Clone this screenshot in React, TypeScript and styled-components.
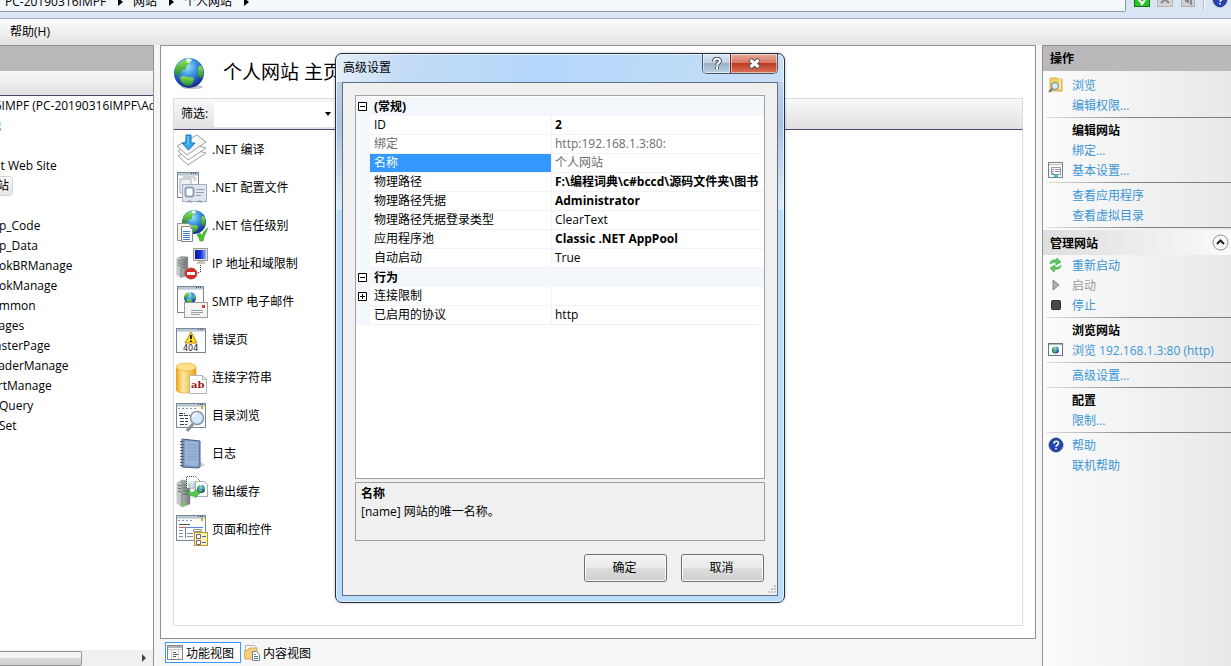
import React from 'react';
import styled, { createGlobalStyle, css } from 'styled-components';

const GlobalStyle = createGlobalStyle`
  * { box-sizing: border-box; }
  html, body { margin: 0; padding: 0; }
  body, button, input, table {
    font-family: 'Open Sans', 'Noto Sans CJK SC', sans-serif;
    font-size: 12px;
    color: #000;
  }
  svg { display: block; flex: none; }
`;

/* ---------- page frame ---------- */

const Page = styled.div`
  position: relative;
  display: flex;
  flex-direction: column;
  height: 100vh;
  overflow: hidden;
  background: #f6f6f6;
`;

const AddressBar = styled.header`
  display: flex;
  flex: none;
  align-items: flex-end;
  height: 19px;
  padding-bottom: 6px;
  background: #d9e5f2;
  border-bottom: 1px solid #a5adb8;
`;

const Breadcrumb = styled.nav`
  display: flex;
  flex: 1;
  align-items: center;
  height: 24px;
  padding: 3px 0 0 5px;
  background: #f4f8fc;
  border: 1px solid #8a97a8;
  border-left: 0;
  border-radius: 0 2px 2px 0;
  overflow: hidden;
`;

const Crumb = styled.a`
  color: #000;
  line-height: 18px;
  text-decoration: none;
  white-space: nowrap;
`;

const CrumbArrow = styled.svg`
  margin: 0 10px 0 12px;
`;

const AddressTools = styled.div`
  display: flex;
  flex: none;
  align-items: center;
  gap: 7px;
  width: 105px;
  height: 24px;
  padding-left: 8px;
`;

const ToolButton = styled.button`
  width: 16px;
  height: 16px;
  padding: 0;
  border: 0;
  background: transparent;
`;

const ToolSeparator = styled.span`
  width: 2px;
  height: 20px;
  background: #fff;
  border-left: 1px solid #b3bfcd;
`;

const MenuBar = styled.nav`
  display: flex;
  flex: none;
  align-items: center;
  height: 26px;
  padding-left: 10px;
  background: linear-gradient(#fdfdfd, #e4e2e4);
`;

const MenuItem = styled.button`
  padding: 0;
  border: 0;
  background: transparent;
  line-height: 20px;
`;

const Workspace = styled.div`
  display: flex;
  flex: 1;
  gap: 6px;
  min-height: 0;
`;

/* ---------- connections tree ---------- */

const TreePanel = styled.aside`
  display: flex;
  flex-direction: column;
  flex: none;
  width: 154px;
  background: #fff;
  border: solid #919191;
  border-width: 1px 1px 0 0;
`;

const PanelTitle = styled.h2`
  flex: none;
  height: 25px;
  margin: 0;
  padding-left: 7px;
  background: #bab8ba;
  font-size: 12px;
  line-height: 25px;
`;

const TreeToolbar = styled.div`
  flex: none;
  height: 25px;
  background: linear-gradient(#f9f9f9, #e2e0e2);
  border-bottom: 1px solid #4c4870;
`;

const Tree = styled.ul`
  flex: 1;
  margin: 0;
  padding: 0;
  list-style: none;
  overflow: hidden;
`;

const TreeRow = styled.li<{ $shift: number }>`
  height: 20px;
  margin-left: ${(p) => -p.$shift}px;
  line-height: 20px;
  white-space: nowrap;
`;

const SelectedNode = styled.span`
  display: inline-block;
  padding: 0 3px;
  line-height: 18px;
  background: linear-gradient(#fafafa, #e6e6e6);
  border: 1px solid #d5d5d5;
  border-radius: 3px;
`;

const ScrollTrack = styled.div`
  display: flex;
  flex: none;
  align-items: center;
  justify-content: space-between;
  height: 16px;
  padding-right: 6px;
  background: #f0f0f0;
`;

const ScrollThumb = styled.div`
  width: 82px;
  height: 15px;
  background: linear-gradient(#f3f3f3 0 45%, #dadadc 50%, #cdcdd0);
  border: 1px solid #979797;
  border-left: 0;
  border-radius: 0 2px 2px 0;
`;

/* ---------- home view ---------- */

const Center = styled.main`
  display: flex;
  flex-direction: column;
  flex: 1;
  min-width: 0;
`;

const HomePanel = styled.section`
  display: flex;
  flex-direction: column;
  flex: 1;
  min-height: 0;
  padding: 12px;
  background: #fff;
  border: 1px solid #919191;
`;

const HomeHeader = styled.div`
  display: flex;
  gap: 17px;
  height: 32px;
  margin-bottom: 8px;
  padding-left: 1px;
`;

const HomeTitle = styled.h1`
  margin: 0;
  font-size: 19px;
  font-weight: 400;
  line-height: 28px;
`;

const FilterBar = styled.div`
  display: flex;
  flex: none;
  align-items: center;
  gap: 6px;
  height: 32px;
  padding-left: 7px;
  background: linear-gradient(#f9f9f9, #e2e0e2);
  border: 1px solid #dcdcdc;
  border-bottom-color: #4c4870;
`;

const FilterLabel = styled.label`
  flex: none;
  line-height: 18px;
`;

const FilterField = styled.div`
  display: flex;
  align-items: center;
  width: 122px;
  height: 25px;
  background: #fff;
`;

const FilterInput = styled.input`
  width: 109px;
  height: 25px;
  padding: 0 4px;
  border: 0;
  outline: 0;
  background: transparent;
`;

const FilterArrow = styled.button`
  display: flex;
  width: 12px;
  padding: 0 0 0 2px;
  border: 0;
  background: transparent;
`;

const FeatureList = styled.ul`
  flex: 1;
  min-height: 0;
  margin: 0;
  padding: 1px 0 0;
  list-style: none;
  border: solid #dedede;
  border-width: 0 1px 1px;
`;

const Feature = styled.li`
  display: flex;
  align-items: center;
  gap: 4px;
  height: 38px;
  padding-left: 2px;
  line-height: 18px;
`;

const ViewTabs = styled.div`
  display: flex;
  flex: none;
  gap: 1px;
  height: 27px;
  padding: 3px 0 3px 5px;
`;

const ViewTab = styled.button<{ $active?: boolean }>`
  display: flex;
  align-items: center;
  gap: 3px;
  height: 21px;
  padding: 0 6px 0 1px;
  border: 1px solid ${(p) => (p.$active ? '#3399ff' : 'transparent')};
  background: ${(p) => (p.$active ? '#fff' : 'transparent')};
`;

/* ---------- actions ---------- */

const ActionsPanel = styled.aside`
  flex: none;
  width: 189px;
  background: linear-gradient(90deg, #fbfbfb, #e9e9e9);
  border: solid #919191;
  border-width: 1px 0 0 1px;
`;

const ActionGroups = styled.div`
  padding-top: 4px;
`;

const ActionRow = styled.div`
  display: flex;
  align-items: center;
  gap: 7px;
  height: 20px;
  padding-left: 5px;
  white-space: nowrap;
`;

const ActionIcon = styled.span`
  flex: none;
  width: 17px;
  height: 16px;
`;

const ActionLink = styled.a`
  color: #3a96d4;
  line-height: 18px;
  padding-top: 2px;
  text-decoration: none;
`;

const DisabledAction = styled.span`
  color: #999;
  line-height: 18px;
  padding-top: 2px;
`;

const ActionHeading = styled.h3`
  margin: 0;
  padding-top: 2px;
  font-size: 12px;
  line-height: 18px;
`;

const Rule = styled.hr`
  height: 1px;
  margin: 2px 0 2px 3px;
  border: 0;
  background: linear-gradient(90deg, #e2e2e2, #808080 50%);
`;

const SectionBar = styled.div`
  display: flex;
  align-items: center;
  justify-content: space-between;
  height: 25px;
  padding: 0 2px 0 7px;
  background: linear-gradient(90deg, #dedede, #fafafa);
`;

const CollapseButton = styled.button`
  width: 17px;
  height: 17px;
  padding: 0;
  border: 0;
  background: transparent;
`;

/* ---------- advanced settings window ---------- */

const Dialog = styled.div`
  position: absolute;
  top: 53px;
  left: 335px;
  display: flex;
  flex-direction: column;
  width: 450px;
  padding: 0 6px 6px;
  border: 1px solid #232f3e;
  border-radius: 7px;
  background:
    linear-gradient(100deg, #e3eefa 0, #c3dbf5 70px, #b4d7fb 200px, #b9d9fa 280px, #c8def5) top / 100% 28px no-repeat,
    linear-gradient(#c8dcf0 0, #a8c4e2 70px, #dcecfb 155px, #b9dcfd 156px);
  box-shadow: inset 0 0 0 1px rgba(255, 255, 255, 0.65), 0 0 3px rgba(0, 0, 0, 0.25);
`;

const TitleBar = styled.div`
  display: flex;
  justify-content: space-between;
  height: 28px;
`;

const DialogTitle = styled.h2`
  margin: 0;
  padding-left: 1px;
  font-size: 12px;
  font-weight: 400;
  line-height: 28px;
`;

const CaptionButtons = styled.div`
  display: flex;
  height: 20px;
  border: 1px solid #46566b;
  border-top: 0;
  border-radius: 0 0 5px 5px;
  overflow: hidden;
`;

const CaptionButton = styled.button<{ $close?: boolean }>`
  display: flex;
  align-items: center;
  justify-content: center;
  width: 27px;
  padding: 0;
  border: 0;
  background: linear-gradient(#dbe7f3, #c1d0e0 47%, #9db2c8 50%, #bdd0e3);
  box-shadow: inset 0 0 0 1px rgba(255, 255, 255, 0.5);
  ${(p) =>
    p.$close &&
    css`
      width: 47px;
      border-left: 1px solid #5b2a24;
      background: linear-gradient(#e8aa9c, #d87867 47%, #bd3a20 50%, #d9755c);
    `}
`;

const Client = styled.div`
  padding: 12px 12px 13px;
  background: #f0f0f0;
  border: 1px solid #5f6f83;
`;

const PropertyBox = styled.div`
  height: 384px;
  padding-top: 1px;
  background: #fff;
  border: 1px solid #a0a0a0;
  overflow: hidden;
`;

const PropertyTable = styled.table`
  width: 100%;
  table-layout: fixed;
  border-collapse: separate;
  border-spacing: 0;
`;

const GutterCol = styled.col`
  width: 14px;
`;

const NameCol = styled.col`
  width: 182px;
`;

const GutterCell = styled.td`
  height: 19px;
  padding: 0;
  background: #f4f7fc;
`;

const CategoryCell = styled.th`
  height: 19px;
  padding: 0 4px;
  background: #f4f7fc;
  line-height: 18px;
  text-align: left;
`;

const NameCell = styled.th<{ $muted?: boolean; $selected?: boolean }>`
  height: 19px;
  padding: 0 4px;
  border: solid #f0f4fa;
  border-width: 0 1px 1px 0;
  background: ${(p) => (p.$selected ? '#3399ff' : '#fff')};
  background-clip: padding-box;
  color: ${(p) => (p.$selected ? '#fff' : p.$muted ? '#6d6d6d' : '#000')};
  font-weight: 400;
  line-height: 18px;
  text-align: left;
`;

const ValueCell = styled.td<{ $muted?: boolean; $bold?: boolean }>`
  height: 19px;
  padding: 0 0 0 3px;
  border-bottom: 1px solid #f0f4fa;
  color: ${(p) => (p.$muted ? '#6d6d6d' : '#000')};
  font-weight: ${(p) => (p.$bold ? 700 : 400)};
  line-height: 18px;
  white-space: nowrap;
  overflow: hidden;
`;

const ExpandButton = styled.button`
  display: block;
  width: 9px;
  height: 9px;
  margin-left: 2px;
  padding: 0;
  border: 0;
  background: transparent;
`;

const HelpPane = styled.div`
  height: 59px;
  margin-top: 3px;
  padding: 2px 5px;
  border: 1px solid #a0a0a0;
  line-height: 18px;
`;

const HelpText = styled.p<{ $bold?: boolean }>`
  margin: 0;
  font-weight: ${(p) => (p.$bold ? 700 : 400)};
`;

const DialogActions = styled.div`
  display: flex;
  justify-content: flex-end;
  gap: 14px;
  margin-top: 13px;
  padding-right: 1px;
`;

const PushButton = styled.button`
  width: 83px;
  height: 28px;
  padding: 0 2px 2px 0;
  border: 1px solid #707070;
  border-radius: 3px;
  background: linear-gradient(#f2f2f2, #ebebeb 48%, #dddddd 50%, #cfcfcf);
  box-shadow: inset 0 0 0 1px #fbfbfb;
`;

const ResizeGrip = styled.svg`
  position: absolute;
  right: 8px;
  bottom: 8px;
`;

/* ---------- icons ---------- */

const SharedGradients = styled.svg`
  position: absolute;
`;

const Gradients = () => (
  <SharedGradients width="0" height="0" aria-hidden="true">
    <defs>
      <radialGradient id="sea" cx="0.45" cy="0.3" r="0.7">
        <stop offset="0" stopColor="#9fe6ff" />
        <stop offset="0.4" stopColor="#3f9ae0" />
        <stop offset="0.8" stopColor="#1e46b4" />
        <stop offset="1" stopColor="#152c80" />
      </radialGradient>
      <linearGradient id="land" x1="0" y1="0" x2="0" y2="1">
        <stop offset="0" stopColor="#8fe05a" />
        <stop offset="1" stopColor="#1c8a2c" />
      </linearGradient>
      <linearGradient id="gold" x1="0" x2="1">
        <stop offset="0" stopColor="#f0a21c" />
        <stop offset="0.35" stopColor="#ffe9a0" />
        <stop offset="1" stopColor="#eda012" />
      </linearGradient>
      <linearGradient id="metal" x1="0" x2="1">
        <stop offset="0" stopColor="#d4d8d8" />
        <stop offset="1" stopColor="#727878" />
      </linearGradient>
      <linearGradient id="screen" x1="0" x2="1">
        <stop offset="0" stopColor="#0d1c9c" />
        <stop offset="0.5" stopColor="#1530d8" />
        <stop offset="1" stopColor="#8fb0ff" />
      </linearGradient>
    </defs>
  </SharedGradients>
);

const Globe = ({ cx, cy, r }: { cx: number; cy: number; r: number }) => (
  <g transform={`translate(${cx} ${cy}) scale(${r / 15})`}>
    <circle r="15" fill="url(#sea)" />
    <path d="M-14 1c-1-7 3-12 9-14l5 0 1 3-3 2-1 4-4 1-2 4-3 2z" fill="url(#land)" />
    <path d="M-9 5c2-3 5-2 7-1 3 0 5 0 7 1 0 4-2 7-5 8-4 0-8-3-9-8z" fill="url(#land)" />
    <path d="M10-7c2-1 4 1 4 4 1 4 0 6-1 8-3 0-5-3-4-6 0-2 0-4 1-6z" fill="url(#land)" />
    <path d="M-3-14c3-1 5 0 6 1l-3 3c-2 0-3-2-3-4z" fill="#e8ffe0" />
  </g>
);

const Frame = ({ x = 0, y = 0, w = 30, h = 25 }: { x?: number; y?: number; w?: number; h?: number }) => (
  <g>
    <rect x={x + 0.5} y={y + 0.5} width={w - 1} height={h - 1} fill="#fbfcfd" stroke="#7d8791" />
    <rect x={x + 1} y={y + 1} width={w - 2} height="2" fill="#b9c6d3" />
    <path d={`M${x + w - 8} ${y + 1.5}h6`} stroke="#3d4c5c" strokeDasharray="1 1" />
    <path d={`M${x + 1} ${y + 3.5}h${w - 2}`} stroke="#d2dae2" />
  </g>
);

const Svg32 = ({ children }: { children: React.ReactNode }) => (
  <svg width="32" height="32" viewBox="0 0 32 32" aria-hidden="true">
    {children}
  </svg>
);

const Svg16 = ({ children }: { children: React.ReactNode }) => (
  <svg width="16" height="16" viewBox="0 0 16 16" aria-hidden="true">
    {children}
  </svg>
);

const CompileIcon = () => (
  <Svg32>
    <g stroke="#9a9fa4" fill="#fff">
      <path d="M2 22l13-7 15 4-18 12z" />
      <path d="M2 17l13-7 15 4-18 12z" />
      <path d="M1 12L21 1l9 7-19 13z" fill="#f6f7f8" />
    </g>
    <path d="M10 1h5v8h4l-6.500 7L6 9h4z" fill="#39a5ec" stroke="#1671b8" />
    <path d="M12 2v9" stroke="#8bd0fa" />
  </Svg32>
);

const ProfileIcon = () => (
  <Svg32>
    <Frame x={1} y={0} w={22} h={26} />
    <path d="M4 7h11v14h-11zM7 5h12v4" fill="#eef1f4" stroke="#a4adb6" />
    <rect x="6.500" y="12.500" width="24" height="17" fill="#dfe6ef" stroke="#a3afbd" />
    <rect x="9.500" y="15.500" width="8" height="9" rx="2" fill="#fff" stroke="#8ea0b6" strokeWidth="2" />
    <path d="M20 17.500h8M20 20.500h8M20 23.500h5" stroke="#90a0b4" />
    <path d="M12 31v-2h3v2M22 31v-2h3v2" fill="none" stroke="#8d9bab" />
  </Svg32>
);

const TrustIcon = () => (
  <Svg32>
    <Globe cx={18} cy={12} r={12} />
    <path d="M1.500 13.500h11l3 3v14h-14z" fill="#f6f1e3" stroke="#98948a" />
    <path d="M5.500 16.500h8l3 3v12h-11z" fill="#fff" stroke="#7e8790" />
    <path d="M7 21.500h7M7 23.500h7M7 25.500h7M7 27.500h7M7 29.500h7" stroke="#4a7cc0" />
    <path d="M21 25l3-2 2 3c1-4 3-6 6-8-2 4-4 8-5 13h-3c-1-3-2-5-3-6z" fill="#4cc52c" stroke="#2a8c18" strokeWidth="0.500" />
  </Svg32>
);

const ServerShape = () => (
  <g>
    <path d="M1 7l5-3 8 1v23l-8 3-5-4z" fill="url(#metal)" stroke="#8a9090" strokeWidth="0.500" />
    <path d="M6 5v25" stroke="#808888" />
    <path d="M2 9l3 1M2 12l3 1M2 15l3 1M7 9h5M7 12h5M7 15h5M7 18h5" stroke="#5e6666" />
  </g>
);

const IpIcon = () => (
  <Svg32>
    <g transform="translate(0 5) scale(0.850 0.800)">
      <ServerShape />
    </g>
    <path d="M17.500 0.500h14v12h-14z" fill="#e4e2d8" stroke="#9c9a90" />
    <path d="M19 2h11v9h-11z" fill="url(#screen)" />
    <path d="M22 13h6l2 3h-10z" fill="#c8c5b8" />
    <path d="M24.500 17v7M18 24.500h6" stroke="#333" strokeDasharray="1 1" />
    <ellipse cx="15" cy="25.500" rx="6" ry="5.500" fill="#d42a26" stroke="#b84a48" />
    <path d="M11 24h8v3h-8z" fill="#fff" />
  </Svg32>
);

const SmtpIcon = () => (
  <Svg32>
    <Frame x={1} y={0} w={27} h={27} />
    <Globe cx={14} cy={12} r={6} />
    <rect x="8.500" y="16.500" width="23" height="15" fill="#f4f4f2" stroke="#9b9b98" />
    <path d="M26 19h3v3h-3z" fill="#e04030" />
    <path d="M15 24.500h12M15 26.500h12M15 28.500h9" stroke="#a0a0a0" />
  </Svg32>
);

const IconText = styled.text`
  font-family: 'DejaVu Sans', sans-serif;
  font-size: 8px;
  fill: #222;
`;

const IconSerifText = styled.text`
  font-family: 'DejaVu Serif', serif;
  font-size: 10px;
  font-weight: 700;
  fill: #a01414;
`;

const ErrorIcon = () => (
  <Svg32>
    <Frame x={0} y={4} w={30} h={25} />
    <path d="M15 8l6 11H9z" fill="#ffd722" stroke="#b89000" strokeLinejoin="round" />
    <path d="M15 11v4M15 16.500v1.500" stroke="#222" strokeWidth="2" />
    <IconText x="7" y="27">404</IconText>
  </Svg32>
);

const ConnectionIcon = () => (
  <Svg32>
    <path d="M0 5v22c0 3 4 4 10 4s10-1 10-4V5z" fill="url(#gold)" stroke="#d28a10" strokeWidth="0.500" />
    <ellipse cx="10" cy="5" rx="10" ry="4" fill="#ffe18a" stroke="#dd9a1c" strokeWidth="0.500" />
    <path d="M13.500 13.500h13l4 4v14h-17z" fill="#fff" stroke="#b0b5ba" />
    <path d="M26.500 13.500v4h4" fill="none" stroke="#b0b5ba" />
    <IconSerifText x="15" y="26">ab</IconSerifText>
  </Svg32>
);

const BrowseDirIcon = () => (
  <Svg32>
    <Frame x={0} y={3} w={30} h={25} />
    <path d="M2 8.500h20" stroke="#8c96a0" strokeDasharray="2 2" />
    <path d="M26 6v3" stroke="#e0a020" strokeWidth="2" />
    <path d="M3 13.500h6M3 15.500h11M4 18.500h8M4 21.500h8M4 24.500h7" stroke="#3b3f44" strokeDasharray="4 1" />
    <path d="M17 24l-6 7" stroke="#8a8f94" strokeWidth="3" />
    <circle cx="21" cy="18" r="6.500" fill="#d3e9f8" stroke="#8795a3" strokeWidth="1.500" />
    <path d="M17 17c0-2 2-4 4-4" stroke="#fff" strokeWidth="2" fill="none" />
  </Svg32>
);

const LogIcon = () => (
  <Svg32>
    <path d="M23 30l6-3-5-4z" fill="#d4d4d4" />
    <path d="M6 1l18 2v26l-2 1-16-1z" fill="#7f9cc4" stroke="#4a6088" />
    <path d="M9 3l13 1v24l-13-1z" fill="#9cb6d8" />
    <path d="M11 7h10M11 10h10M11 13h10M11 16h10M11 19h10M11 22h10" stroke="#7f9cc6" />
    <path d="M4 3.500h4M4 6.500h4M4 9.500h4M4 12.500h4M4 15.500h4M4 18.500h4M4 21.500h4M4 24.500h4M4 27.500h4" stroke="#59606c" />
  </Svg32>
);

const CacheIcon = () => (
  <Svg32>
    <ServerShape />
    <path d="M10.500 12V0.500h9l4 4v8" fill="#fff" stroke="#444" strokeDasharray="1 1" />
    <g opacity="0.350">
      <Globe cx={16} cy={9} r={4} />
    </g>
    <path d="M19.500 5.500h9l3 3v12h-12z" fill="#fff" stroke="#a4acb2" />
    <Globe cx={25} cy={13} r={4} />
    <path d="M11 14c3 3 6 3 8 1v-2l5 4-5 5v-2c-4 1-7-1-8-6z" fill="#56c94c" stroke="#2b8a26" strokeWidth="0.500" />
    <path d="M7 27h3v2H7z" fill="#58e018" />
  </Svg32>
);

const PagesIcon = () => (
  <Svg32>
    <Frame x={0} y={1} w={30} h={26} />
    <path d="M2 6.500h16" stroke="#8c96a0" strokeDasharray="2 2" />
    <path d="M26 4v3" stroke="#e0a020" strokeWidth="2" />
    <path d="M3 10.500h11" stroke="#555" />
    <path d="M3 13.500h8" stroke="#e06060" />
    <path d="M11 13.500h16M9.500 13v11" stroke="#5b82e0" />
    <path d="M3 16.500h4M3 19.500h4M3 22.500h4M11 19.500h6M11 22.500h6" stroke="#888" />
    <path d="M17.500 15.500h8v2h-8z" fill="#fff" stroke="#999" />
    <rect x="18.500" y="18.500" width="13" height="13" fill="#fff3a8" stroke="#b89a28" />
    <path d="M20.500 20.500h4v4h-4zM20.500 26.500h4v4h-4z" fill="#fff" stroke="#775a90" />
    <path d="M26 22.500h4M26 28.500h4" stroke="#3a62c0" />
  </Svg32>
);

const FolderSearchIcon = () => (
  <Svg16>
    <path d="M2 1h7l1 1h4v12H2z" fill="#f2cf62" stroke="#d6ae4c" />
    <path d="M11 2h2v10h-2z" fill="#fae9a4" />
    <path d="M5 11l-4 4" stroke="#777" strokeWidth="2" />
    <circle cx="7" cy="9" r="3.500" fill="#d6ecfa" stroke="#6f8496" />
  </Svg16>
);

const FormIcon = () => (
  <Svg16>
    <rect x="0.500" y="0.500" width="14" height="15" fill="#f8f8f8" stroke="#77828c" />
    <path d="M1 2.500h13" stroke="#b4bfc9" />
    <path d="M3.500 5.500h9v7h-9zM3 7.500h3M7 7.500h5M3 9.500h3M7 9.500h5M4 11.500h2" fill="none" stroke="#939ca4" />
    <path d="M6 14h4" stroke="#2fc4f0" strokeWidth="2" />
  </Svg16>
);

const RestartIcon = () => (
  <Svg16>
    <path d="M2 7c0-3 3-5 6-4l1-2 4 4-5 3 0-2c-2-1-4 0-6 1z" fill="#58c858" stroke="#2c9a3a" strokeWidth="0.500" />
    <path d="M13 8c0 3-3 5-6 4l-1 3-4-4 5-3 0 2c2 1 4 0 6-2z" fill="#58c858" stroke="#2c9a3a" strokeWidth="0.500" />
  </Svg16>
);

const StartIcon = () => (
  <Svg16>
    <path d="M5 3l6 5-6 5z" fill="#b2b2b2" stroke="#858585" />
  </Svg16>
);

const StopIcon = () => (
  <Svg16>
    <rect x="3.500" y="3.500" width="9" height="9" rx="1" fill="#484848" stroke="#2c2c2c" />
  </Svg16>
);

const BrowseSiteIcon = () => (
  <Svg16>
    <rect x="0.500" y="1.500" width="14" height="12" fill="#fff" stroke="#68737f" />
    <path d="M1 2.500h13" stroke="#a8b5c2" />
    <Globe cx={7.5} cy={8} r={3.5} />
  </Svg16>
);

const HelpIcon = () => (
  <Svg16>
    <circle cx="8" cy="8" r="7.500" fill="#d4d8e2" stroke="#8f97a8" strokeWidth="0.500" />
    <circle cx="8" cy="8" r="6.500" fill="#2446b4" stroke="#152c86" />
    <path d="M6 6.500c0-3 4.500-3 4.500-.3C10.500 8 8 8 8 9.800M8 11v1.600" fill="none" stroke="#fff" strokeWidth="1.600" />
  </Svg16>
);

const FeaturesViewIcon = () => (
  <Svg16>
    <rect x="0.500" y="0.500" width="15" height="14" fill="#fbfbfb" stroke="#85858a" />
    <path d="M1 2h14" stroke="#aab2bb" strokeWidth="2" />
    <path d="M1 4.500h14M4.500 5v9M11.500 5v9" stroke="#c8c8c8" />
    <path d="M6 7.500h3M6 9.500h5M6 11.500h3" stroke="#4c5a4c" />
  </Svg16>
);

const ContentViewIcon = () => (
  <Svg16>
    <path d="M1.500 0.500h9l2 2v9h-11z" fill="#fff" stroke="#b0b0b0" />
    <path d="M0 6l4-1 1-2h8v11H1z" fill="#f1d080" stroke="#d2ab56" />
    <path d="M8.500 6.500h4l3 3v6h-7z" fill="#fff" stroke="#78828c" />
    <path d="M10 9.500h2M10 11.500h4M10 13.500h4" stroke="#4a7cc0" />
  </Svg16>
);

const ArrowIcon = () => (
  <CrumbArrow width="5" height="8" viewBox="0 0 5 8" aria-hidden="true">
    <path d="M0 0l5 4-5 4z" fill="#000" />
  </CrumbArrow>
);

const ExpandGlyph = ({ open }: { open: boolean }) => (
  <svg width="9" height="9" viewBox="0 0 9 9" aria-hidden="true">
    <path d={open ? 'M.5.5h8v8h-8zM2 4.500h5' : 'M.5.5h8v8h-8zM2 4.500h5M4.500 2v5'} fill="#fff" stroke="#000" />
  </svg>
);

/* ---------- data ---------- */

const treeNodes = [
  { label: 'PC-20190316IMPF (PC-20190316IMPF\\Administrator)', shift: 72 },
  { label: '应用程序池', shift: 59 },
  { label: '', shift: 0 },
  { label: 'Default Web Site', shift: 36 },
  { label: '个人网站', shift: 43, selected: true },
  { label: '', shift: 0 },
  { label: 'App_Code', shift: 16 },
  { label: 'App_Data', shift: 16 },
  { label: 'BookBRManage', shift: 16 },
  { label: 'BookManage', shift: 16 },
  { label: 'Common', shift: 16 },
  { label: 'Images', shift: 16 },
  { label: 'MasterPage', shift: 16 },
  { label: 'ReaderManage', shift: 16 },
  { label: 'SortManage', shift: 16 },
  { label: 'Query', shift: 1 },
  { label: 'Set', shift: 1 },
];

const features = [
  { label: '.NET 编译', Icon: CompileIcon },
  { label: '.NET 配置文件', Icon: ProfileIcon },
  { label: '.NET 信任级别', Icon: TrustIcon },
  { label: 'IP 地址和域限制', Icon: IpIcon },
  { label: 'SMTP 电子邮件', Icon: SmtpIcon },
  { label: '错误页', Icon: ErrorIcon },
  { label: '连接字符串', Icon: ConnectionIcon },
  { label: '目录浏览', Icon: BrowseDirIcon },
  { label: '日志', Icon: LogIcon },
  { label: '输出缓存', Icon: CacheIcon },
  { label: '页面和控件', Icon: PagesIcon },
];

type Property = {
  name: string;
  value?: string;
  category?: boolean;
  open?: boolean;
  muted?: boolean;
  bold?: boolean;
  selected?: boolean;
};

const properties: Property[] = [
  { name: '(常规)', category: true, open: true },
  { name: 'ID', value: '2', bold: true },
  { name: '绑定', value: 'http:192.168.1.3:80:', muted: true },
  { name: '名称', value: '个人网站', muted: true, selected: true },
  { name: '物理路径', value: 'F:\\编程词典\\c#bccd\\源码文件夹\\图书', bold: true },
  { name: '物理路径凭据', value: 'Administrator', bold: true },
  { name: '物理路径凭据登录类型', value: 'ClearText' },
  { name: '应用程序池', value: 'Classic .NET AppPool', bold: true },
  { name: '自动启动', value: 'True' },
  { name: '行为', category: true, open: true },
  { name: '连接限制', value: '', open: false },
  { name: '已启用的协议', value: 'http' },
];

/* ---------- parts ---------- */

const Action = ({ label, icon, disabled }: { label: string; icon?: React.ReactNode; disabled?: boolean }) => (
  <ActionRow>
    <ActionIcon>{icon}</ActionIcon>
    {disabled ? <DisabledAction>{label}</DisabledAction> : <ActionLink href="#">{label}</ActionLink>}
  </ActionRow>
);

const Heading = ({ label }: { label: string }) => (
  <ActionRow>
    <ActionIcon />
    <ActionHeading>{label}</ActionHeading>
  </ActionRow>
);

const PropertyRow = ({ item }: { item: Property }) => (
  <tr>
    <GutterCell>
      {item.open !== undefined && (
        <ExpandButton aria-label={item.name}>
          <ExpandGlyph open={item.open} />
        </ExpandButton>
      )}
    </GutterCell>
    {item.category ? (
      <CategoryCell colSpan={2}>{item.name}</CategoryCell>
    ) : (
      <>
        <NameCell scope="row" $muted={item.muted} $selected={item.selected}>
          {item.name}
        </NameCell>
        <ValueCell $muted={item.muted} $bold={item.bold}>
          {item.value}
        </ValueCell>
      </>
    )}
  </tr>
);

const SettingsDialog = () => (
  <Dialog role="dialog" aria-labelledby="dialog-title">
    <TitleBar>
      <DialogTitle id="dialog-title">高级设置</DialogTitle>
      <CaptionButtons>
        <CaptionButton aria-label="帮助">
          <svg width="10" height="13" viewBox="0 0 10 13" aria-hidden="true">
            <path d="M2 4.500c0-3.500 6-3.500 6-.5 0 2-3 2-3 4.500M5 10v2" fill="none" stroke="#46505e" strokeWidth="4" />
            <path d="M2 4.500c0-3.500 6-3.500 6-.5 0 2-3 2-3 4.500M5 10v2" fill="none" stroke="#fff" strokeWidth="2" />
          </svg>
        </CaptionButton>
        <CaptionButton $close aria-label="关闭">
          <svg width="13" height="11" viewBox="0 0 13 11" aria-hidden="true">
            <path d="M2 1.500l9 8M11 1.500l-9 8" stroke="#4d4f5c" strokeWidth="5" />
            <path d="M2.500 2l8 7M10.500 2l-8 7" stroke="#fff" strokeWidth="3" />
          </svg>
        </CaptionButton>
      </CaptionButtons>
    </TitleBar>
    <Client>
      <PropertyBox>
        <PropertyTable>
          <colgroup>
            <GutterCol />
            <NameCol />
            <col />
          </colgroup>
          <tbody>
            {properties.map((item) => (
              <PropertyRow key={item.name} item={item} />
            ))}
          </tbody>
        </PropertyTable>
      </PropertyBox>
      <HelpPane>
        <HelpText $bold>名称</HelpText>
        <HelpText>[name] 网站的唯一名称。</HelpText>
      </HelpPane>
      <DialogActions>
        <PushButton>确定</PushButton>
        <PushButton>取消</PushButton>
      </DialogActions>
    </Client>
    <ResizeGrip width="9" height="9" viewBox="0 0 9 9" aria-hidden="true">
      <path d="M7 0h2v2H7zM7 3h2v2H7zM4 3h2v2H4zM7 6h2v2H7zM4 6h2v2H4zM1 6h2v2H1z" fill="#c6c6c6" />
    </ResizeGrip>
  </Dialog>
);

export default function App() {
  return (
    <Page>
      <GlobalStyle />
      <Gradients />
      <AddressBar>
        <Breadcrumb aria-label="路径">
          <Crumb href="#">PC-20190316IMPF</Crumb>
          <ArrowIcon />
          <Crumb href="#">网站</Crumb>
          <ArrowIcon />
          <Crumb href="#">个人网站</Crumb>
          <ArrowIcon />
        </Breadcrumb>
        <AddressTools>
          <ToolButton aria-label="刷新">
            <Svg16>
              <rect x="0.500" y="0.500" width="15" height="14" fill="#25c425" stroke="#167016" />
              <path d="M4 7l4 4M12 6l-3 5-2 2" stroke="#fff" strokeWidth="2" />
            </Svg16>
          </ToolButton>
          <ToolButton aria-label="停止">
            <Svg16>
              <rect x="0.500" y="0.500" width="15" height="14" fill="#d4d4d4" stroke="#b4b4b4" />
              <path d="M4 4l8 7M12 4l-8 7" stroke="#888" strokeWidth="2" />
            </Svg16>
          </ToolButton>
          <ToolButton aria-label="主页">
            <Svg16>
              <rect x="1.500" y="0.500" width="13" height="14" fill="#cfcfcf" stroke="#b0b0b0" />
              <path d="M5 9h3v2M11 4v9" stroke="#888" strokeWidth="2" fill="none" />
            </Svg16>
          </ToolButton>
          <ToolSeparator />
          <ToolButton aria-label="帮助">
            <HelpIcon />
          </ToolButton>
        </AddressTools>
      </AddressBar>
      <MenuBar>
        <MenuItem>帮助(H)</MenuItem>
      </MenuBar>
      <Workspace>
        <TreePanel>
          <PanelTitle />
          <TreeToolbar />
          <Tree>
            {treeNodes.map((node, i) => (
              <TreeRow key={i} $shift={node.shift}>
                {node.selected ? <SelectedNode>{node.label}</SelectedNode> : node.label}
              </TreeRow>
            ))}
          </Tree>
          <ScrollTrack>
            <ScrollThumb />
            <svg width="5" height="8" viewBox="0 0 5 8" aria-hidden="true">
              <path d="M0 0l4 4-4 4z" fill="#444" />
            </svg>
          </ScrollTrack>
        </TreePanel>
        <Center>
          <HomePanel>
            <HomeHeader>
              <svg width="32" height="32" viewBox="0 0 32 32" aria-hidden="true">
                <ellipse cx="18" cy="29" rx="11" ry="2" fill="#c4c4c4" />
                <Globe cx={15} cy={15} r={15} />
              </svg>
              <HomeTitle>个人网站 主页</HomeTitle>
            </HomeHeader>
            <FilterBar>
              <FilterLabel htmlFor="filter">筛选:</FilterLabel>
              <FilterField>
                <FilterInput id="filter" />
                <FilterArrow aria-label="展开">
                  <svg width="6" height="4" viewBox="0 0 6 4" aria-hidden="true">
                    <path d="M0 0h6L3 4z" fill="#000" />
                  </svg>
                </FilterArrow>
              </FilterField>
            </FilterBar>
            <FeatureList>
              {features.map(({ label, Icon }) => (
                <Feature key={label}>
                  <Icon />
                  {label}
                </Feature>
              ))}
            </FeatureList>
          </HomePanel>
          <ViewTabs>
            <ViewTab $active>
              <FeaturesViewIcon />
              功能视图
            </ViewTab>
            <ViewTab>
              <ContentViewIcon />
              内容视图
            </ViewTab>
          </ViewTabs>
        </Center>
        <ActionsPanel>
          <PanelTitle>操作</PanelTitle>
          <ActionGroups>
            <Action label="浏览" icon={<FolderSearchIcon />} />
            <Action label="编辑权限..." />
            <Rule />
            <Heading label="编辑网站" />
            <Action label="绑定..." />
            <Action label="基本设置..." icon={<FormIcon />} />
            <Rule />
            <Action label="查看应用程序" />
            <Action label="查看虚拟目录" />
            <Rule />
            <SectionBar>
              <ActionHeading>管理网站</ActionHeading>
              <CollapseButton aria-label="折叠">
                <svg width="17" height="17" viewBox="0 0 17 17" aria-hidden="true">
                  <circle cx="8.500" cy="8.500" r="7.500" fill="#f8f8f8" stroke="#8f8f8f" />
                  <path d="M5 10l3.500-3.500L12 10" fill="none" stroke="#222" strokeWidth="2" />
                </svg>
              </CollapseButton>
            </SectionBar>
            <Action label="重新启动" icon={<RestartIcon />} />
            <Action label="启动" icon={<StartIcon />} disabled />
            <Action label="停止" icon={<StopIcon />} />
            <Rule />
            <Heading label="浏览网站" />
            <Action label="浏览 192.168.1.3:80 (http)" icon={<BrowseSiteIcon />} />
            <Rule />
            <Action label="高级设置..." />
            <Rule />
            <Heading label="配置" />
            <Action label="限制..." />
            <Rule />
            <Action label="帮助" icon={<HelpIcon />} />
            <Action label="联机帮助" />
          </ActionGroups>
        </ActionsPanel>
      </Workspace>
      <SettingsDialog />
    </Page>
  );
}
